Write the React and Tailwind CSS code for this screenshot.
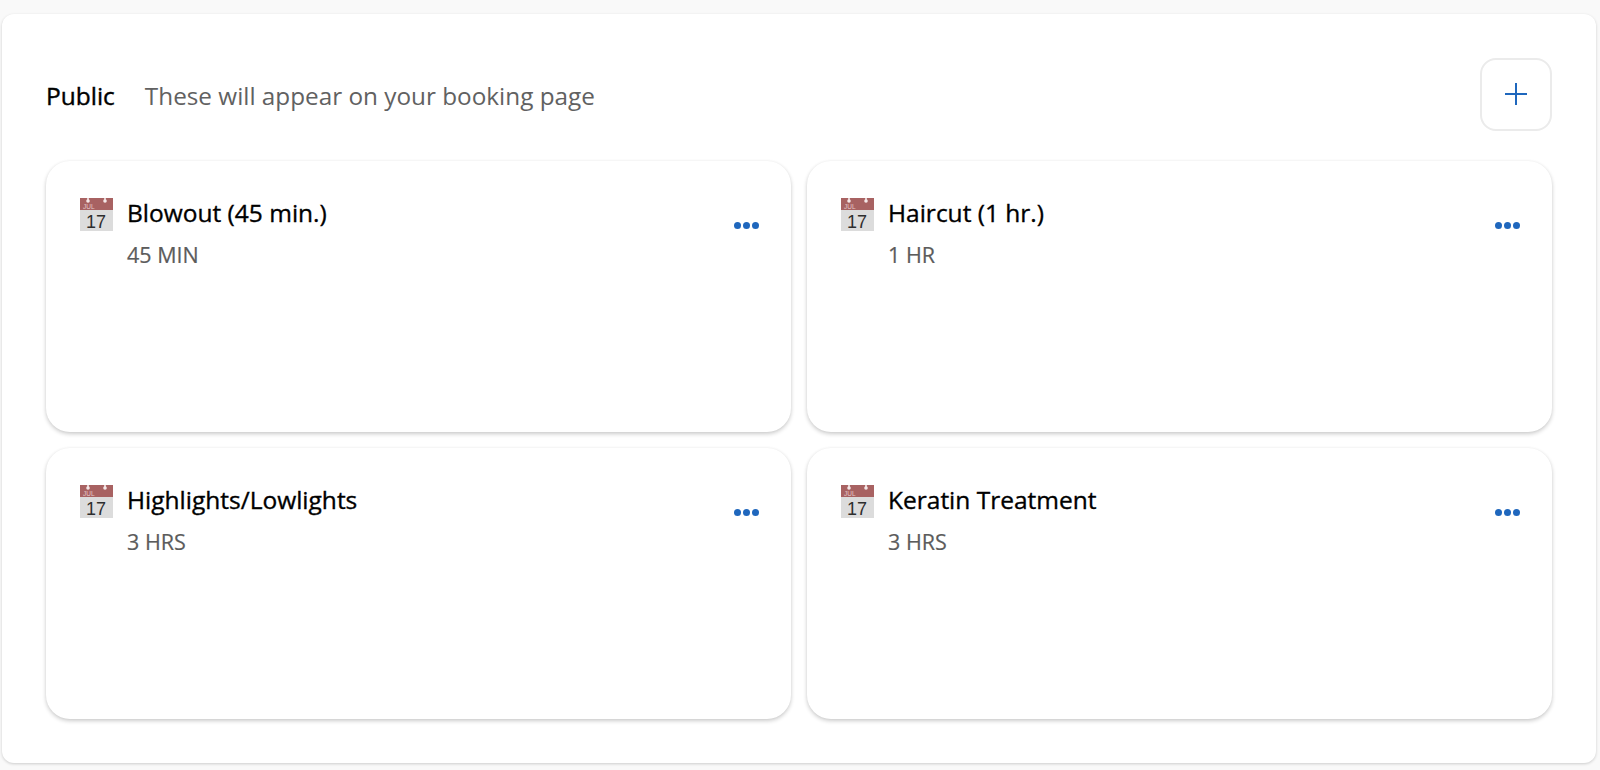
const items = [
  { title: "Blowout (45 min.)", sub: "45 MIN" },
  { title: "Haircut (1 hr.)", sub: "1 HR" },
  { title: "Highlights/Lowlights", sub: "3 HRS" },
  { title: "Keratin Treatment", sub: "3 HRS" },
];

function CalendarIcon() {
  return (
    <svg width="33" height="33" viewBox="0 0 33 33" className="shrink-0">
      <rect x="0" y="0" width="33" height="33" fill="#dcdcdc" />
      <rect x="0" y="0" width="33" height="12" fill="#a86262" />
      <circle cx="8" cy="3" r="1.8" fill="#f4e8e8" />
      <rect x="7.2" y="0" width="1.6" height="3" fill="#f4e8e8" />
      <circle cx="25" cy="3" r="1.8" fill="#f4e8e8" />
      <rect x="24.2" y="0" width="1.6" height="3" fill="#f4e8e8" />
      <text x="3" y="11" fontSize="6.5" fill="#e4c8c8" fontFamily="'Liberation Sans', sans-serif">JUL</text>
      <text x="16" y="29.5" fontSize="18" textAnchor="middle" fill="#2e2e2e" fontFamily="'Liberation Sans', sans-serif">17</text>
    </svg>
  );
}

function Card({ title, sub }) {
  return (
    <div className="h-[271px] rounded-[24px] bg-white shadow-[0_2px_4px_rgba(0,0,0,0.2),0_0_3px_rgba(0,0,0,0.04)] pl-[34px] pr-[32px] pt-[37px] flex items-start">
      <CalendarIcon />
      <div className="ml-[14px] flex-1">
        <div className="text-[24.5px] leading-[30px] text-black [-webkit-text-stroke:0.35px_black]">{title}</div>
        <div className="mt-[13px] text-[21.5px] leading-[28px] text-[#5c5c5c] [-webkit-text-stroke:0.2px_#5c5c5c]">{sub}</div>
      </div>
      <div className="mt-[24px] flex gap-[2px]">
        <span className="w-[7px] h-[7px] rounded-full bg-[#1f67bd]" />
        <span className="w-[7px] h-[7px] rounded-full bg-[#1f67bd]" />
        <span className="w-[7px] h-[7px] rounded-full bg-[#1f67bd]" />
      </div>
    </div>
  );
}

export default function App() {
  return (
    <div className="h-[770px] bg-[#f9f9f9] pl-[2px] pr-[4px] pt-[14px] pb-[7px] font-['Open_Sans',sans-serif] overflow-hidden">
      <div className="h-full rounded-[12px] bg-white shadow-[0_1px_3px_rgba(0,0,0,0.18)] pl-[44px] pr-[44px] pt-[44px]">
        <div className="flex items-center h-[73px] mb-[30px]">
          <span className="mt-[3px] text-[24.5px] text-black [-webkit-text-stroke:0.4px_black]">Public</span>
          <span className="mt-[4px] ml-[30px] text-[24.3px] text-[#616161]">These will appear on your booking page</span>
          <button className="ml-auto w-[72px] h-[73px] rounded-[16px] border-2 border-[#ebebeb] bg-white flex items-center justify-center">
            <svg width="24" height="24" viewBox="0 0 24 24" fill="none" stroke="#1f67bd" strokeWidth="2" className="-mt-[1px]">
              <path d="M12 1v22M1 12h22" />
            </svg>
          </button>
        </div>
        <div className="grid grid-cols-2 gap-x-[16px] gap-y-[16px]">
          {items.map((it) => (
            <Card key={it.title} {...it} />
          ))}
        </div>
      </div>
    </div>
  );
}
